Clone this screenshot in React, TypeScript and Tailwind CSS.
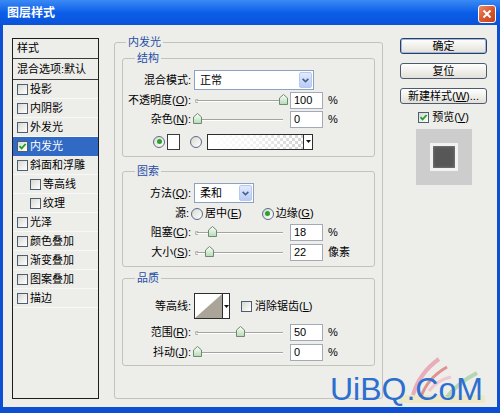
import React from "react";

const F = "font-['Liberation_Sans','Noto_Sans_CJK_SC',sans-serif]";

function CheckBox({ checked = false }: { checked?: boolean }) {
  return (
    <span className="flex h-[11px] w-[11px] shrink-0 items-center justify-center border border-[#4f5d73] bg-linear-to-br from-[#d8d8d2] to-white">
      {checked && (
        <svg width="9" height="9" viewBox="0 0 9 9">
          <path d="M1.5 4.2 L3.6 6.4 L7.6 2" fill="none" stroke="#21a121" strokeWidth="1.8" />
        </svg>
      )}
    </span>
  );
}

function Radio({ on = false }: { on?: boolean }) {
  return (
    <span className="flex h-[12px] w-[12px] shrink-0 items-center justify-center rounded-full border border-[#5b6b86] bg-linear-to-br from-[#d8d8d2] to-white">
      {on && <span className="h-[5px] w-[5px] rounded-full bg-[#2aa12a]" />}
    </span>
  );
}

function Thumb() {
  return (
    <svg width="9" height="11" viewBox="0 0 9 11">
      <defs>
        <linearGradient id="thumbg" x1="0" y1="0" x2="0" y2="1">
          <stop offset="0" stopColor="#ffffff" />
          <stop offset="1" stopColor="#b4dab4" />
        </linearGradient>
      </defs>
      <path d="M0.5 10.5 V4 L4.5 0.5 L8.5 4 V10.5 Z" fill="url(#thumbg)" stroke="#6f8a6f" />
    </svg>
  );
}

function Slider({ pct }: { pct: number }) {
  return (
    <div className="relative h-[17px] w-[92px] shrink-0">
      <div className="absolute left-[3px] right-[3px] top-[8px] h-[2px] border-t border-b border-t-[#a3a3a3] border-b-white" />
      <div className="absolute left-[1px] top-[7px] h-[4px] w-[3px] rounded-l-full border border-r-0 border-[#b0b0b0]" />
      <div className="absolute top-[2px]" style={{ left: `${3 + (86 * pct) / 100 - 4.5}px` }}>
        <Thumb />
      </div>
    </div>
  );
}

function Num({ v }: { v: string }) {
  return (
    <div className="flex h-[17px] w-[33px] shrink-0 items-center border border-[#a3aab5] bg-white pl-[3px] text-[11px] leading-none">
      {v}
    </div>
  );
}

function Chevron() {
  return (
    <span className="flex h-[16px] w-[13px] items-center justify-center rounded-[2px] border border-[#b7c9f1] bg-linear-to-b from-[#e2eafd] to-[#b9ccf6]">
      <svg width="7" height="5" viewBox="0 0 7 5">
        <path d="M0.6 0.8 L3.5 3.6 L6.4 0.8" fill="none" stroke="#4a5f8c" strokeWidth="1.6" />
      </svg>
    </span>
  );
}

function U({ c }: { c: string }) {
  return <span className="underline underline-offset-1">{c}</span>;
}

function SliderRow({
  label,
  pct,
  v,
  unit,
  mt,
}: {
  label: React.ReactNode;
  pct: number;
  v: string;
  unit: string;
  mt: string;
}) {
  return (
    <div className={`flex h-[17px] items-center ${mt}`}>
      <span className="w-[68px] shrink-0 text-right leading-none">{label}</span>
      <span className="ml-[3px]">
        <Slider pct={pct} />
      </span>
      <span className="ml-[4px]">
        <Num v={v} />
      </span>
      <span className="ml-[5px] leading-none">{unit}</span>
    </div>
  );
}

function Legend({ children, ml }: { children: React.ReactNode; ml: string }) {
  return (
    <legend className={`${ml} px-[2px] text-[11px] leading-[14px] text-[#1f4ea5]`}>{children}</legend>
  );
}

function Btn({ children, def = false }: { children: React.ReactNode; def?: boolean }) {
  return (
    <div
      className={`flex h-[16px] w-full items-center justify-center rounded-[3px] border bg-linear-to-b from-white to-[#e2e0d8] text-[11px] leading-none ${
        def ? "border-[#2d3f5c] shadow-[inset_0_0_0_1px_#9db8e8]" : "border-[#4d5b72]"
      }`}
    >
      {children}
    </div>
  );
}

const items: { t: string; sel?: boolean; indent?: boolean }[] = [
  { t: "投影" },
  { t: "内阴影" },
  { t: "外发光" },
  { t: "内发光", sel: true },
  { t: "斜面和浮雕" },
  { t: "等高线", indent: true },
  { t: "纹理", indent: true },
  { t: "光泽" },
  { t: "颜色叠加" },
  { t: "渐变叠加" },
  { t: "图案叠加" },
  { t: "描边" },
];

export default function App() {
  return (
    <div className={`flex h-[413px] w-[500px] flex-col bg-[#0c4fd2] text-[11px] text-black ${F}`}>
      {/* title bar */}
      <div className="flex h-[25px] shrink-0 items-center justify-between bg-linear-to-b from-[#3a8af5] via-[#0b5ee8] to-[#0a53da] pl-[7px] pr-[4px]">
        <span className="text-[12px] font-bold leading-none text-white">图层样式</span>
        <div className="mt-[2px] flex h-[18px] w-[18px] items-center justify-center rounded-[3px] border border-white bg-linear-to-br from-[#ea8a68] via-[#d9582f] to-[#c3401c]">
          <svg width="10" height="10" viewBox="0 0 10 10">
            <path d="M1.5 1.5 L8.5 8.5 M8.5 1.5 L1.5 8.5" stroke="#fff" strokeWidth="2" />
          </svg>
        </div>
      </div>

      {/* body */}
      <div className="relative mx-[3px] flex h-[382px] shrink-0 items-start bg-[#ededea]">
        {/* style list */}
        <div className="ml-[9px] mt-[13px] flex h-[361px] w-[87px] shrink-0 flex-col border border-[#1d1d1d]">
          <div className="flex h-[20px] shrink-0 items-center border-b border-[#3a3a3a] pl-[4px] leading-none">样式</div>
          <div className="flex h-[21px] shrink-0 items-center border-b border-[#3a3a3a] pl-[4px] leading-none">
            混合选项:默认
          </div>
          {items.map((it) => (
            <div
              key={it.t}
              className={`flex h-[19px] shrink-0 items-center gap-[2px] border-b leading-none ${
                it.indent ? "pl-[17px]" : "pl-[4px]"
              } ${it.sel ? "border-[#316ac5] bg-[#316ac5] text-white" : "border-[#f8f8f6]"}`}
            >
              <CheckBox checked={it.sel} />
              <span>{it.t}</span>
            </div>
          ))}
        </div>

        {/* middle */}
        <fieldset className="ml-[15px] mt-[10px] h-[364px] w-[269px] shrink-0 rounded-[3px] border border-[#c3c3bb] px-[7px] pt-[2px]">
          <Legend ml="ml-[4px]">内发光</Legend>

          {/* 结构 */}
          <fieldset className="rounded-[3px] border border-[#c3c3bb] px-0 pb-[6px] pt-[5px]">
            <Legend ml="ml-[12px]">结构</Legend>
            <div className="flex h-[20px] items-center">
              <span className="w-[68px] shrink-0 text-right leading-none">混合模式:</span>
              <div className="ml-[3px] flex h-[20px] w-[120px] items-center justify-between border border-[#8da2c0] bg-white pl-[5px] pr-[1px] leading-none">
                <span>正常</span>
                <Chevron />
              </div>
            </div>
            <SliderRow
              mt="mt-[2px]"
              label={
                <>
                  不透明度(<U c="O" />):
                </>
              }
              pct={100}
              v="100"
              unit="%"
            />
            <SliderRow
              mt="mt-[2px]"
              label={
                <>
                  杂色(<U c="N" />):
                </>
              }
              pct={0}
              v="0"
              unit="%"
            />
            <div className="mt-[5px] flex h-[17px] items-center pl-[30px]">
              <Radio on />
              <span className="ml-[2px] h-[16px] w-[13px] border border-[#3a3a3a] bg-white" />
              <span className="ml-[10px]">
                <Radio />
              </span>
              <div className="ml-[5px] flex h-[16px] w-[106px] border border-[#2e2e2e]">
                <div className="h-full flex-1 bg-[image:repeating-conic-gradient(#d2d2d2_0%_25%,#ffffff_0%_50%)] bg-[length:6px_6px]">
                  <div className="h-full w-full bg-linear-to-r from-white via-white/70 to-transparent" />
                </div>
                <div className="flex w-[9px] items-center justify-center border-l border-[#2e2e2e] bg-white">
                  <svg width="5" height="3" viewBox="0 0 5 3">
                    <path d="M0 0 H5 L2.5 3 Z" fill="#111" />
                  </svg>
                </div>
              </div>
            </div>
          </fieldset>

          {/* 图索 */}
          <fieldset className="mt-[7px] rounded-[3px] border border-[#c3c3bb] px-0 pb-[5px] pt-[5px]">
            <Legend ml="ml-[12px]">图索</Legend>
            <div className="flex h-[20px] items-center">
              <span className="w-[68px] shrink-0 text-right leading-none">
                方法(<U c="Q" />):
              </span>
              <div className="ml-[3px] flex h-[20px] w-[60px] items-center justify-between border border-[#8da2c0] bg-white pl-[5px] pr-[1px] leading-none">
                <span>柔和</span>
                <Chevron />
              </div>
            </div>
            <div className="mt-[2px] flex h-[17px] items-center leading-none">
              <span className="w-[66px] shrink-0 text-right">源:</span>
              <span className="ml-[2px]">
                <Radio />
              </span>
              <span className="ml-[2px]">
                居中(<U c="E" />)
              </span>
              <span className="ml-[20px]">
                <Radio on />
              </span>
              <span className="ml-[2px]">
                边缘(<U c="G" />)
              </span>
            </div>
            <SliderRow
              mt="mt-[2px]"
              label={
                <>
                  阻塞(<U c="C" />):
                </>
              }
              pct={18}
              v="18"
              unit="%"
            />
            <SliderRow
              mt="mt-[3px]"
              label={
                <>
                  大小(<U c="S" />):
                </>
              }
              pct={14}
              v="22"
              unit="像素"
            />
          </fieldset>

          {/* 品质 */}
          <fieldset className="mt-[4px] rounded-[3px] border border-[#c3c3bb] px-0 pb-[4px] pt-[8px]">
            <Legend ml="ml-[12px]">品质</Legend>
            <div className="flex h-[26px] items-center leading-none">
              <span className="w-[68px] shrink-0 text-right">等高线:</span>
              <div className="ml-[3px] flex h-[26px] w-[36px] border border-[#2e2e2e] bg-white">
                <svg width="27" height="24" viewBox="0 0 27 24" className="shrink-0">
                  <polygon points="0,24 27,0 27,24" fill="#aaa598" />
                </svg>
                <div className="flex flex-1 items-center justify-center border-l border-[#2e2e2e]">
                  <svg width="5" height="3" viewBox="0 0 5 3">
                    <path d="M0 0 H5 L2.5 3 Z" fill="#111" />
                  </svg>
                </div>
              </div>
              <span className="ml-[11px]">
                <CheckBox />
              </span>
              <span className="ml-[3px]">
                消除锯齿(<U c="L" />)
              </span>
            </div>
            <SliderRow
              mt="mt-[5px]"
              label={
                <>
                  范围(<U c="R" />):
                </>
              }
              pct={50}
              v="50"
              unit="%"
            />
            <SliderRow
              mt="mt-[3px]"
              label={
                <>
                  抖动(<U c="J" />):
                </>
              }
              pct={0}
              v="0"
              unit="%"
            />
          </fieldset>
        </fieldset>

        {/* right column */}
        <div className="ml-[17px] mt-[13px] flex w-[87px] shrink-0 flex-col items-center">
          <Btn def>确定</Btn>
          <div className="mt-[9px] w-full">
            <Btn>复位</Btn>
          </div>
          <div className="mt-[9px] w-full">
            <Btn>
              新建样式(<U c="W" />)...
            </Btn>
          </div>
          <div className="mt-[7px] flex h-[13px] items-center gap-[3px] leading-none">
            <CheckBox checked />
            <span>
              预览(<U c="V" />)
            </span>
          </div>
          <div className="mt-[5px] flex h-[56px] w-[56px] items-center justify-center bg-[#cdcdcd]">
            <div className="h-[28px] w-[28px] bg-[#f2f2f2] p-[3px]">
              <div className="h-full w-full bg-[#575757] shadow-[inset_0_0_3px_#8a8a8a]" />
            </div>
          </div>
        </div>

        {/* watermark */}
        <svg
          className="pointer-events-none absolute left-[392px] top-[326px]"
          width="95"
          height="56"
          viewBox="0 0 95 56"
        >
          <rect x="4" y="44" width="86" height="8" fill="#f1e3a8" opacity="0.55" />
          <path d="M18 44 C22 30 30 18 44 8" stroke="#e67792" strokeWidth="4" fill="none" opacity="0.55" />
          <path d="M26 46 C30 34 38 24 52 16" stroke="#d84646" strokeWidth="3" fill="none" opacity="0.55" />
          <path d="M34 40 C40 32 46 28 56 26" stroke="#f2a0b8" strokeWidth="3" fill="none" opacity="0.5" />
          <path d="M52 46 C60 36 70 28 82 22" stroke="#7cc07c" strokeWidth="4" fill="none" opacity="0.5" />
        </svg>
        <span className="pointer-events-none absolute left-[327px] top-[348px] font-['Liberation_Sans',sans-serif] text-[32px] leading-[32px] text-[#2c6fd0]">
          UiBQ.CoM
        </span>
      </div>
    </div>
  );
}
